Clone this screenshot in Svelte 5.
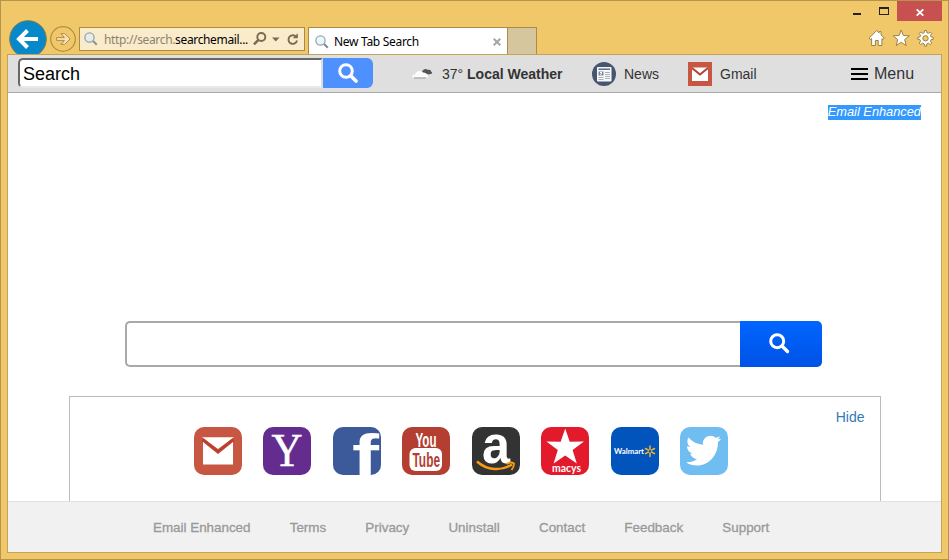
<script>
    let query = '';
    let toolbarQuery = 'Search';
    let panelOpen = true;

    const links = ['gmail', 'yahoo', 'facebook', 'youtube', 'amazon', 'macys', 'walmart', 'twitter'];

    const footerLinks = ['Email Enhanced', 'Terms', 'Privacy', 'Uninstall', 'Contact', 'Feedback', 'Support'];
</script>

<div class="window">
    <!-- Window buttons -->
    <div class="controls">
        <svg class="min" width="8" height="2"><rect width="8" height="2" fill="#222" /></svg>
        <svg class="max" width="10" height="8"><path d="M0 0h10v8H0zM1 2v5h8V2z" fill="#222" fill-rule="evenodd" /></svg>
        <button class="close" aria-label="Close">
            <svg width="8" height="7" viewBox="0 0 8 7"><path d="M.7.3l6.6 6.4M7.3.3L.7 6.7" stroke="#fff" stroke-width="1.7" /></svg>
        </button>
    </div>

    <!-- Browser navigation -->
    <div class="nav">
        <svg class="back" width="38" height="34" viewBox="0 0 38 34">
            <circle cx="19" cy="19" r="18.3" fill="#0788c8" stroke="#80784a" />
            <path d="M10 19h19M18.5 10.5L10 19l8.5 8.5" fill="none" stroke="#fff" stroke-width="4" />
        </svg>
        <svg class="forward" width="26" height="26" viewBox="0 0 26 26">
            <circle cx="13" cy="13" r="12.3" fill="none" stroke="#b08f45" stroke-width="1.2" />
            <path d="M6.5 11.6h8l-3.5-4h3.6l5.5 5.4-5.5 5.4H11l3.5-4h-8z" fill="#f8e3b5" stroke="#b08f45" />
        </svg>
        <div class="address">
            <svg class="lens" width="14" height="14" viewBox="0 0 14 14">
                <path d="M8.8 8.8l4 4" stroke="#8b9298" stroke-width="2" />
                <circle cx="5.5" cy="5.5" r="4.6" fill="#e5eeed" stroke="#98a5aa" stroke-width="1.3" />
            </svg>
            <span class="url">http://search.<b>searchemail...</b></span>
            <svg width="46" height="14" viewBox="0 0 46 14" fill="none" stroke="#776b50">
                <path d="M5.2 8.2L1 12.3" stroke-width="2.5" />
                <circle cx="8.3" cy="5" r="4" stroke-width="1.9" />
                <path d="M19 5.500h7.500l-3.700 4z" fill="#776b50" stroke="none" />
                <path d="M43.400 5.200A4.300 4.300 0 1 0 44 8.500" stroke-width="1.900" />
                <path d="M44.800 1.200v5h-5z" fill="#776b50" stroke="none" />
            </svg>
        </div>
        <div class="tab">
            <svg class="lens" width="14" height="14" viewBox="0 0 14 14">
                <path d="M8.8 8.8l4 4" stroke="#7e8b96" stroke-width="2" />
                <circle cx="5.5" cy="5.5" r="4.6" fill="#edf7fc" stroke="#92a8b6" stroke-width="1.3" />
            </svg>
            <span class="title">New Tab Search</span>
            <svg width="8" height="8" viewBox="0 0 8 8"><path d="M.7.7l6.6 6.6M7.3.7L.7 7.3" stroke="#a5a5a5" stroke-width="2" /></svg>
        </div>
        <div class="new-tab"></div>
        <svg class="tools" width="66" height="18" viewBox="0 0 66 18" fill="#fff" stroke="#9b8147">
            <path d="M1 9.2L8.7 1.5l2.4 2.4V2.6h2v3.3l3.3 3.3-1.6 1.2-.9-.8v6.9h-3.7v-5H7.4v5H3.6V9.6l-1 .9z" />
            <path d="M33.2 1l2.1 5.5 6 .3-4.6 3.8 1.5 6-5-3.3-5 3.3 1.5-6-4.6-3.800 6-.3z" />
            <path d="M56.5 1.5h2l.3 2.2 1.7.7 1.8-1.4 1.5 1.5-1.4 1.8.7 1.7 2.2.3v2l-2.200.3-.7 1.700 1.400 1.800-1.500 1.500-1.800-1.400-1.700.7-.3 2.200h-2l-.3-2.200-1.700-.7-1.800 1.400-1.500-1.500 1.400-1.800-.7-1.700-2.200-.3v-2l2.200-.3.7-1.700-1.400-1.800 1.500-1.500 1.800 1.400 1.700-.7z" />
            <circle cx="57.5" cy="9.3" r="2.7" fill="#f0c869" />
        </svg>
    </div>

    <div class="page">
        <!-- Toolbar -->
        <div class="toolbar">
            <input class="small-search" bind:value={toolbarQuery} />
            <button class="small-go" aria-label="Search">
                <svg width="20" height="20" viewBox="0 0 20 20" fill="none" stroke="#fff">
                    <circle cx="8" cy="8" r="6.3" stroke-width="3" />
                    <path d="M12.7 12.7l5.3 5.3" stroke-width="3.6" stroke-linecap="round" />
                </svg>
            </button>
            <div class="weather">
                <svg width="21" height="12" viewBox="0 0 21 12">
                    <path d="M10 4c1-3 4-4 6-2 2-.7 3 .3 3 1.5 1.5.3 1.5 2 .5 2.3l-3 .7z" fill="#555" />
                    <path d="M1 9.5C-.5 8 1 6.3 3 6.5 4 3 9 1.5 11 5c2-.8 3 0 3.5 1.5 2 .2 2.3 2.5.5 3z" fill="#fcfcfc" />
                    <path d="M2 10h12" stroke="#999" />
                </svg>
                <span>37° <b>Local Weather</b></span>
            </div>
            <div class="news">
                <svg width="24" height="24" viewBox="0 0 24 24">
                    <circle cx="12" cy="12" r="12" fill="#465671" />
                    <rect x="5" y="5" width="14.5" height="14.5" rx="1" fill="#f7f8fa" />
                    <path d="M6.5 7.2h11.5" stroke="#53627b" stroke-width="1.4" />
                    <path d="M6.5 9.5h5v4h-5z" fill="#7c8797" />
                    <path d="M8 10.5h2M8 12.5l2-1" stroke="#fff" />
                    <path d="M13 10.5h5M13 12.5h5M13 14.5h5M6.5 15.5h5M6.5 17.5h5M13 16.5h5" stroke="#a9b1bd" />
                </svg>
                <span>News</span>
            </div>
            <div class="mail">
                <svg width="24" height="24" viewBox="0 0 24 24">
                    <rect width="24" height="24" fill="#c75643" />
                    <path d="M4 5.500h16v13.500H4z" fill="#fff" />
                    <path d="M4 6l8 6.500L20 6" fill="none" stroke="#b5402e" stroke-width="2" />
                </svg>
                <span>Gmail</span>
            </div>
            <div class="menu">
                <svg width="17" height="12"><path d="M0 1h17M0 6h17M0 11h17" stroke="#000" stroke-width="2" /></svg>
                <span>Menu</span>
            </div>
        </div>

        <!-- Main search -->
        <div class="main">
            <span class="brand">Email Enhanced</span>
            <div class="search">
                <input bind:value={query} aria-label="Search the web" />
                <button aria-label="Search">
                    <svg width="21" height="21" viewBox="0 0 21 21" fill="none" stroke="#fff">
                        <circle cx="8.2" cy="8.2" r="6.5" stroke-width="3" />
                        <path d="M13 13l5.5 5.5" stroke-width="3.4" stroke-linecap="round" />
                    </svg>
                </button>
            </div>

            {#if panelOpen}
                <div class="panel">
                    <button class="hide" on:click={() => (panelOpen = false)}>Hide</button>
                    <div class="tiles">
                        {#each links as link}
                            <svg class="tile {link}" viewBox="0 0 48 48">
                                {#if link === 'gmail'}
                                    <path d="M9 14v23.500h30V14L24 25z" fill="#fff" />
                                    <path d="M8 10.300h32L24 22z" fill="#fff" />
                                    <path d="M8.500 12.500L24 25l15.500-12.500" fill="none" stroke="#b9412e" stroke-width="3.200" />
                                {:else if link === 'yahoo'}
                                    <text x="8.500" y="39" font-size="46" textLength="31" lengthAdjust="spacingAndGlyphs" class="serif">Y</text>
                                {:else if link === 'facebook'}
                                    <text x="19" y="48" font-size="57" textLength="27" lengthAdjust="spacingAndGlyphs" font-weight="bold">f</text>
                                {:else if link === 'youtube'}
                                    <text x="13.500" y="19.500" font-size="20" textLength="21" lengthAdjust="spacingAndGlyphs" font-weight="bold">You</text>
                                    <rect x="7.500" y="21" width="32.500" height="23" rx="6" fill="#fff" />
                                    <text class="red" x="10.500" y="39.500" font-size="20" textLength="27.500" lengthAdjust="spacingAndGlyphs" font-weight="bold">Tube</text>
                                {:else if link === 'amazon'}
                                    <text x="10" y="35.500" font-size="53" textLength="28" lengthAdjust="spacingAndGlyphs" font-weight="bold">a</text>
                                    <path d="M5 34.500c10 9 24 10 35 3" fill="none" stroke="#f79b13" stroke-width="2.500" />
                                    <path d="M34.500 37c3-2 6-1.500 7.500-.5 0 2-1 5-2.500 6.500" fill="none" stroke="#f79b13" stroke-width="1.800" />
                                {:else if link === 'macys'}
                                    <path d="M24.200 1.500l4.500 13.200 14.300-.2-11.400 8.500 4.200 13.500-11.600-8-11.600 8L16.800 23 5.400 14.500l14.300.2z" fill="#fff" />
                                    <text x="11" y="44.500" font-size="11.500" textLength="29" lengthAdjust="spacingAndGlyphs" class="round">macys</text>
                                {:else if link === 'walmart'}
                                    <text x="3" y="27" font-size="8" textLength="30" lengthAdjust="spacingAndGlyphs" class="sans">Walmart</text>
                                    <path d="M39 19v3.500M39 26v3.500M34.500 21.500l3 1.700M40.500 25l3 1.700M34.500 26.700l3-1.700M40.500 23.200l3-1.700" stroke="#f4b52a" stroke-width="1.500" stroke-linecap="round" />
                                {:else}
                                    <path d="M8.500 10.500c4 4.500 9 7 14.500 7.200-1-5 3-9 7.500-9 2 0 4 .8 5.200 2.100 1.600-.3 3-1 4.200-1.600-.4 1.500-1.200 2.500-2.300 3.300l3.400-.7c-.7 1.500-1.700 2.400-3 3.200C38 28 29 38.500 17 38.500c-4 0-8-1-11-3.200 4 .3 8-.8 11-3.200-3.400-.3-6-2.500-6.800-5.300h3C9.500 26 7.200 23 7 19.200l3.300.8c-3-2.200-3.800-6.300-1.800-9.500z" fill="#fff" />
                                {/if}
                            </svg>
                        {/each}
                    </div>
                </div>
            {/if}
        </div>

        <!-- Footer -->
        <div class="footer">
            {#each footerLinks as name}
                <span>{name}</span>
            {/each}
        </div>
    </div>
</div>

<style>
    :global(body) {
        font-family: "Liberation Sans", Arial, sans-serif;
    }

    .window {
        box-sizing: border-box;
        width: 949px;
        height: 560px;
        display: flex;
        flex-direction: column;
        padding: 0 6px 6px;
        border: 1px solid #b4954b;
        background: #f0c869;
        overflow: hidden;
    }

    svg {
        display: block;
        flex-shrink: 0;
    }

    button {
        display: flex;
        align-items: center;
        justify-content: center;
        padding: 0;
        border: none;
        cursor: pointer;
    }

    input {
        box-sizing: border-box;
        margin: 0;
        outline: none;
        font-family: inherit;
    }

    /* Browser chrome */
    .controls {
        height: 20px;
        display: flex;
        justify-content: flex-end;
        flex-shrink: 0;
    }

    .min {
        margin: 12px 18px 0 0;
    }

    .max {
        margin: 6px 8px 0 0;
    }

    .close {
        width: 45px;
        height: 20px;
        background: #c75050;
    }

    .close svg {
        margin-top: 2px;
    }

    .nav {
        height: 34px;
        margin-top: -1px;
        display: flex;
        align-items: flex-start;
        flex-shrink: 0;
        font-family: "Noto Sans", sans-serif;
        font-size: 12px;
    }

    .back {
        margin-left: 2px;
    }

    .forward {
        margin: 6px 3px 0;
    }

    .address {
        box-sizing: border-box;
        width: 226px;
        height: 24px;
        margin: 7px 3px 0 0;
        display: flex;
        align-items: center;
        padding-left: 4px;
        border: 1px solid #a98c49;
        background: #faebcb;
        color: #8b8371;
    }

    .url {
        width: 149px;
        margin-left: 6px;
        white-space: nowrap;
        letter-spacing: -0.35px;
    }

    .url b {
        font-weight: normal;
        color: #000;
    }

    .tab {
        box-sizing: border-box;
        width: 200px;
        height: 27px;
        margin-top: 7px;
        display: flex;
        align-items: center;
        padding: 1px 6px 0;
        border: 1px solid #a98c49;
        border-bottom: none;
        background: #fff;
    }

    .title {
        flex: 1;
        margin-left: 5px;
        letter-spacing: -0.3px;
    }

    .new-tab {
        box-sizing: border-box;
        width: 29px;
        height: 27px;
        margin-top: 7px;
        border: 1px solid #a98c49;
        border-width: 1px 1px 0 0;
        background: #d6c69d;
    }

    .tools {
        margin: 9px 8px 0 auto;
    }

    /* Page */
    .page {
        flex: 1;
        display: flex;
        flex-direction: column;
        border: 1px solid #c4a357;
        background: #fff;
    }

    .toolbar {
        box-sizing: border-box;
        height: 38px;
        display: flex;
        align-items: center;
        padding-left: 10px;
        border-bottom: 1px solid #a9a9a9;
        background: #dfdfdf;
        color: #333;
        font-size: 14px;
    }

    .small-search {
        width: 305px;
        height: 30px;
        margin-bottom: 1px;
        padding: 3px 3px 0;
        border: 2px solid #686868;
        border-right-color: #ddd;
        border-bottom-color: #e8e8e8;
        border-radius: 5px 0 0 5px;
        font-size: 18px;
    }

    .small-go {
        width: 50px;
        height: 30px;
        margin-bottom: 1px;
        border-radius: 0 6px 6px 0;
        background: #4d90fe;
    }

    .small-go svg {
        margin-right: 1px;
    }

    .weather,
    .news,
    .mail,
    .menu {
        display: flex;
        align-items: center;
        gap: 8px;
    }

    .weather {
        width: 179px;
        margin-left: 40px;
        gap: 9px;
        white-space: nowrap;
    }

    .weather svg {
        margin-left: -1px;
    }

    .news {
        width: 96px;
    }

    .mail {
        width: 163px;
    }

    .menu {
        gap: 6px;
        font-size: 16px;
    }

    .main {
        flex: 1;
        display: flex;
        flex-direction: column;
    }

    .brand {
        align-self: flex-end;
        height: 15px;
        margin: 12px 20px 0 0;
        background: #3399ff;
        color: #fff;
        font-size: 12.8px;
        font-style: italic;
        line-height: 14px;
    }

    .search {
        display: flex;
        margin: 201px 0 0 117px;
    }

    .search input {
        width: 615px;
        height: 46px;
        padding: 0 10px;
        border: 2px solid #a9a9a9;
        border-right: none;
        border-radius: 5px 0 0 5px;
        font-size: 18px;
    }

    .search button {
        width: 82px;
        height: 46px;
        border-radius: 0 5px 5px 0;
        background: linear-gradient(#0066ff, #0052e6);
    }

    .search button svg {
        margin: 0 3px 2px 0;
    }

    .panel {
        box-sizing: border-box;
        width: 812px;
        flex: 1;
        margin: 29px 0 0 61px;
        border: 1px solid #bbb;
        border-bottom: none;
    }

    .hide {
        height: 16px;
        margin: 12px 15.5px 0 auto;
        background: none;
        color: #337ab7;
        font-family: inherit;
        font-size: 14px;
    }

    .tiles {
        display: flex;
        gap: 21.45px;
        margin: 2px 0 0 124px;
    }

    .tile {
        width: 48px;
        height: 48px;
        border-radius: 10px;
        overflow: visible;
    }

    .tile text {
        fill: #fff;
    }

    .tile .red {
        fill: #b33e31;
    }

    .tile .serif {
        font-family: "Liberation Serif", serif;
        stroke: #fff;
        stroke-width: 0.5px;
    }

    .tile .sans {
        font-family: Lato, sans-serif;
        font-weight: bold;
    }

    .tile .round {
        font-family: Lato, sans-serif;
        font-weight: bold;
    }

    .gmail { background: #c75643; }
    .yahoo { background: #652c8f; }
    .facebook { background: #3c5a9a; }
    .youtube { background: #b33e31; }
    .amazon { background: #333; }
    .macys { background: #e21a2c; }
    .walmart { background: #0054bb; }
    .twitter { background: #70bdf2; }

    .footer {
        box-sizing: border-box;
        height: 51px;
        display: flex;
        align-items: center;
        gap: 39.2px;
        padding: 1px 0 0 145px;
        border-top: 1px solid #e0e0e0;
        background: #f1f1f1;
        color: #999;
        font-size: 13.4px;
        -webkit-text-stroke: 0.3px #999;
    }
</style>
